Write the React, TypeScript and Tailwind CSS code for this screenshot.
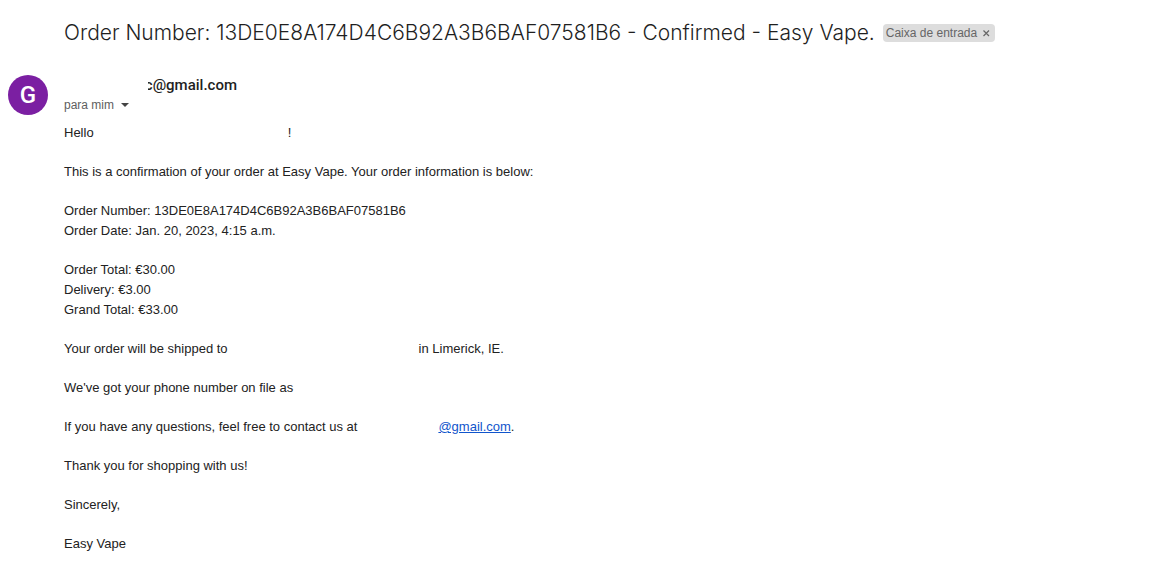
import type { ReactNode } from "react";

const orderNumber = "13DE0E8A174D4C6B92A3B6BAF07581B6";

function Paragraph({ children }: { children: ReactNode }) {
  return <p>{children}</p>;
}

function Hidden({ className }: { className: string }) {
  return <span className={`inline-block ${className}`} />;
}

function SubjectLine() {
  return (
    <header className="flex items-center gap-2 pt-[19px] pl-16">
      <h1 className="font-['Inter',sans-serif] text-[21px] leading-7 font-light text-[#1f1f1f]">
        Order Number: {orderNumber} - Confirmed - Easy Vape.
      </h1>
      <div className="flex h-[18px] shrink-0 items-center rounded-sm bg-[#dddddd] pr-1 pl-[3px] text-xs text-[#666666]">
        <span>Caixa de entrada</span>
        <button type="button" aria-label="Remover" className="ml-1 flex size-2.5 items-center justify-center">
          <svg viewBox="0 0 10 10" className="size-2.5" stroke="#666666" strokeWidth="1.2" fill="none">
            <path d="M2.5 2.5L8 8M8 2.5L2.5 8" />
          </svg>
        </button>
      </div>
    </header>
  );
}

function Sender() {
  return (
    <div className="flex gap-4 pt-7 pl-2">
      <div className="flex size-10 shrink-0 items-center justify-center rounded-full bg-[#7b1fa2] font-['Roboto',sans-serif] text-2xl font-medium text-white">
        G
      </div>
      <div className="flex flex-col">
        <div className="ml-[84px] flex h-5 w-[89px] justify-end overflow-hidden font-['Roboto',sans-serif] text-[15px] leading-5 font-medium text-[#1f1f1f]">
          c@gmail.com
        </div>
        <button type="button" className="flex h-5 items-center gap-[7px] text-left text-xs text-[#5e5e5e]">
          para mim
          <svg viewBox="0 0 8 4" className="h-1 w-2" fill="#444444">
            <path d="M0 0H8L4 4Z" />
          </svg>
        </button>
      </div>
    </div>
  );
}

export default function App() {
  return (
    <main className="min-h-screen bg-white font-['Liberation_Sans',Arial,sans-serif] text-[#222222]">
      <SubjectLine />
      <Sender />
      <article className="flex flex-col gap-[19px] pt-2 pb-6 pl-16 text-[13px] leading-5">
        <Paragraph>
          Hello
          <Hidden className="w-[194px]" />!
        </Paragraph>
        <Paragraph>This is a confirmation of your order at Easy Vape. Your order information is below:</Paragraph>
        <Paragraph>
          Order Number: {orderNumber}
          <br />
          Order Date: Jan. 20, 2023, 4:15 a.m.
        </Paragraph>
        <Paragraph>
          Order Total: €30.00
          <br />
          Delivery: €3.00
          <br />
          Grand Total: €33.00
        </Paragraph>
        <Paragraph>
          Your order will be shipped to
          <Hidden className="w-[191px]" />
          in Limerick, IE.
        </Paragraph>
        <Paragraph>We've got your phone number on file as</Paragraph>
        <Paragraph>
          If you have any questions, feel free to contact us at
          <Hidden className="w-[81px]" />
          <a href="#contact" className="text-[#1155cc] underline">
            @gmail.com
          </a>
          .
        </Paragraph>
        <Paragraph>Thank you for shopping with us!</Paragraph>
        <Paragraph>Sincerely,</Paragraph>
        <Paragraph>Easy Vape</Paragraph>
      </article>
    </main>
  );
}
